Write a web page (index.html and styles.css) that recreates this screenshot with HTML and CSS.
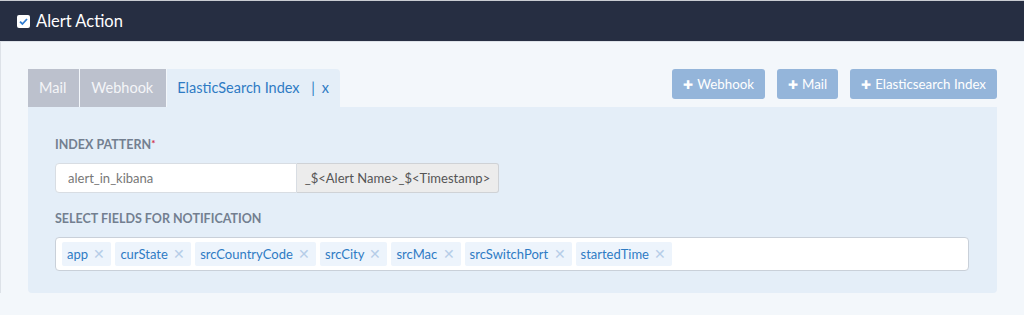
FILE: index.html
```html
<!DOCTYPE html>
<html lang="en">
<head>
    <meta charset="UTF-8">
    <meta name="viewport" content="width=device-width, initial-scale=1.0">
    <title>Alert Action</title>
    <link rel="stylesheet" href="styles.css">
</head>
<body>
    <div class="header">
        <span class="check">
            <svg width="11" height="11" viewBox="0 0 11 11"><path d="M2 5.6 L4.4 8 L9 3" fill="none" stroke="#2f7bd0" stroke-width="1.8"/></svg>
        </span>
        <span class="title">Alert Action</span>
    </div>
    <div class="content">
        <div class="toprow">
            <div class="tabs">
                <div class="tab">Mail</div>
                <div class="tab">Webhook</div>
                <div class="tab active">ElasticSearch Index <span class="sep">|</span> <span class="close">x</span></div>
            </div>
            <div class="actions">
                <button class="add"><span class="plus">&#10010;</span>Webhook</button>
                <button class="add"><span class="plus">&#10010;</span>Mail</button>
                <button class="add"><span class="plus">&#10010;</span>Elasticsearch Index</button>
            </div>
        </div>
        <div class="panel">
            <div class="label">Index Pattern<span class="req">*</span></div>
            <div class="group">
                <input type="text" class="field" value="alert_in_kibana">
                <span class="addon">_$&lt;Alert Name&gt;_$&lt;Timestamp&gt;</span>
            </div>
            <div class="label second">Select Fields for Notification</div>
            <div class="multi">
                <span class="tag">app <span class="x">&#10005;</span></span>
                <span class="tag">curState <span class="x">&#10005;</span></span>
                <span class="tag">srcCountryCode <span class="x">&#10005;</span></span>
                <span class="tag">srcCity <span class="x">&#10005;</span></span>
                <span class="tag">srcMac <span class="x">&#10005;</span></span>
                <span class="tag">srcSwitchPort <span class="x">&#10005;</span></span>
                <span class="tag">startedTime <span class="x">&#10005;</span></span>
            </div>
        </div>
    </div>
</body>
</html>
```
FILE: styles.css
```css
html {
    font-family: Lato, "Open Sans", sans-serif;
}
body{
    margin: 0;
    background-color: #f3f7fb;
    height: 315px;
    overflow: hidden;
}
.header{
    height: 40px;
    border-top: 1px solid #c9ccd2;
    background-color: #262e42;
    color: white;
    display: flex;
    align-items: center;
    padding-left: 17px;
}
.check{
    width: 13px;
    height: 13px;
    background-color: white;
    border-radius: 2px;
    display: flex;
    align-items: center;
    justify-content: center;
    margin-right: 6px;
}
.title{
    font-size: 16.5px;
}
.content{
    border-top: 1px solid #dde2e8;
    border-left: 1px solid #dde2e8;
    padding: 27px 27px 0 27px;
}
.toprow{
    display: flex;
    justify-content: space-between;
    align-items: flex-start;
}
.tabs{
    display: flex;
    height: 38px;
}
.tab{
    background-color: #bcc1cd;
    color: #f4f5f8;
    font-size: 14.5px;
    padding: 0 13px 0 11px;
    line-height: 38px;
    margin-right: 1px;
}
.tab.active{
    background-color: #e4eef8;
    color: #2f7bc4;
    padding: 0 11px 0 10px;
    border-top-right-radius: 4px;
    margin-right: 0;
}
.sep{
    margin-left: 8px;
    margin-right: 3px;
}
.actions{
    display: flex;
    gap: 12px;
}
.add{
    background-color: #94b5da;
    color: white;
    border-style: none;
    border-radius: 3px;
    height: 30px;
    font-family: Lato, sans-serif;
    font-size: 13.3px;
    padding: 0 11px;
}
.plus{
    font-size: 12px;
    margin-right: 4px;
}
.panel{
    background-color: #e4eef8;
    border-radius: 0 0 4px 4px;
    padding: 30px 28px 22px 27px;
}
.label{
    font-size: 12.5px;
    font-weight: bold;
    text-transform: uppercase;
    color: #737f90;
    height: 14px;
    margin-bottom: 12px;
}
.label.second{
    margin-top: 18px;
}
.req{
    color: #d0304a;
    font-size: 10px;
    vertical-align: top;
}
.group{
    display: flex;
    height: 30px;
}
.field{
    width: 242px;
    box-sizing: border-box;
    border: 1px solid #d8dde3;
    border-radius: 4px 0 0 4px;
    padding: 0 12px;
    font-family: Lato, sans-serif;
    font-size: 13px;
    color: #777;
}
.addon{
    width: 202px;
    box-sizing: border-box;
    border: 1px solid #cfd2d6;
    border-left-style: none;
    border-radius: 0 3px 3px 0;
    background-color: #ececec;
    color: #555;
    font-size: 13px;
    display: flex;
    align-items: center;
    justify-content: center;
}
.multi{
    background-color: white;
    border: 1px solid #c9d0d9;
    border-radius: 4px;
    height: 34px;
    box-sizing: border-box;
    display: flex;
    align-items: center;
    gap: 4px;
    padding: 0 6px;
}
.tag{
    background-color: #edf4fc;
    color: #2f7bc4;
    font-size: 13px;
    height: 24px;
    line-height: 24px;
    padding: 0 6px 0 5px;
    border-radius: 2px;
}
.x{
    color: #b6cde8;
    font-size: 14px;
    margin-left: 2px;
}
```
